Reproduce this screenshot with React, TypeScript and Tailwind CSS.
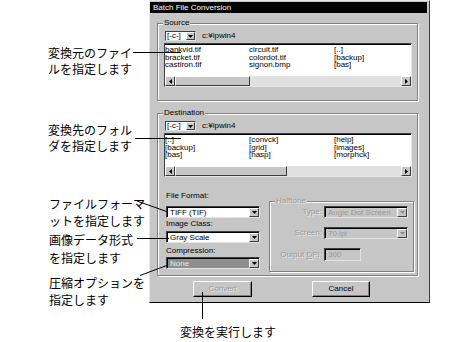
import React from "react";

const raised =
  "bg-[#c6c6c6] border border-t-white border-l-white border-r-[#3c3c3c] border-b-[#3c3c3c]";

function Tri({ dir, gray }: { dir: "down" | "left" | "right"; gray?: boolean }) {
  const fill = gray ? "#8c8c8c" : "#000";
  if (dir === "down")
    return (
      <svg width="5" height="3" viewBox="0 0 5 3">
        <polygon points="0,0 5,0 2.5,3" fill={fill} />
      </svg>
    );
  return (
    <svg width="3" height="5" viewBox="0 0 3 5">
      <polygon points={dir === "left" ? "3,0 3,5 0,2.5" : "0,0 0,5 3,2.5"} fill={fill} />
    </svg>
  );
}

function Group({
  label,
  className,
  gray,
  children,
}: {
  label: string;
  className: string;
  gray?: boolean;
  children: React.ReactNode;
}) {
  return (
    <div
      className={`relative border border-[#808080] shadow-[1px_1px_0_#fff,inset_1px_1px_0_#fff] ${className}`}
    >
      <span
        className={`absolute -top-[6px] left-[5px] px-[1px] bg-[#c6c6c6] leading-[10px] ${
          gray ? "text-[#9a9a9a] [text-shadow:1px_1px_0_#e8e8e8]" : "text-black"
        }`}
      >
        {label}
      </span>
      {children}
    </div>
  );
}

function Select({
  value,
  w,
  h = "h-[12px]",
  disabled,
  highlight,
}: {
  value: string;
  w: string;
  h?: string;
  disabled?: boolean;
  highlight?: boolean;
}) {
  const field = highlight
    ? "bg-[#8e8e8e] text-[#e8e8e8]"
    : disabled
    ? "bg-[#c6c6c6] text-[#9a9a9a]"
    : "bg-white text-black";
  return (
    <div
      className={`flex ${w} ${h} border border-t-[#404040] border-l-[#404040] border-r-[#e4e4e4] border-b-[#e4e4e4] shadow-[inset_1px_1px_0_#000]`}
    >
      <div className={`flex-1 flex items-center pl-[2px] mt-[1px] ml-[1px] leading-none ${field}`}>
        {value}
      </div>
      <div className={`w-[10px] mt-[1px] flex items-center justify-center ${raised}`}>
        <Tri dir="down" gray={disabled} />
      </div>
    </div>
  );
}

function Drive() {
  return (
    <div className="flex items-center h-[10px] ml-[1px]">
      <div className="flex w-[31px] h-[10px] border border-t-[#404040] border-l-[#404040] border-r-[#e4e4e4] border-b-[#e4e4e4]">
        <div className="flex-1 bg-white flex items-center pl-[1px] leading-none">[-c-]</div>
        <div className={`w-[9px] flex items-center justify-center ${raised}`}>
          <Tri dir="down" />
        </div>
      </div>
      <span className="ml-[6px] leading-none">c:¥ipwin4</span>
    </div>
  );
}

function FileList({ rows, thumb }: { rows: string[][]; thumb: string }) {
  return (
    <div className="mt-[2px] w-[248px] h-[44px] flex flex-col border border-t-[#404040] border-l-[#404040] border-r-[#e8e8e8] border-b-[#e8e8e8] shadow-[inset_0_1px_0_#000]">
      <div className="flex-1 bg-white mt-[1px] pt-[1px]">
        {rows.map((r, i) => (
          <div key={i} className="grid grid-cols-[84px_85px_1fr] leading-[7.5px] h-[7.5px]">
            {r.map((c, j) => (
              <span key={j}>{c}</span>
            ))}
          </div>
        ))}
      </div>
      <div className="flex h-[10px]">
        <div className={`w-[10px] flex items-center justify-center ${raised}`}>
          <Tri dir="left" />
        </div>
        <div className={`${thumb} ${raised}`} />
        <div className="flex-1 bg-[#e0e0e0]" />
        <div className={`w-[10px] flex items-center justify-center ${raised}`}>
          <Tri dir="right" />
        </div>
      </div>
    </div>
  );
}

function Label({ children }: { children: React.ReactNode }) {
  return <div className="h-[10px] leading-[10px]">{children}</div>;
}

function Button({ children, disabled, w }: { children: React.ReactNode; disabled?: boolean; w: string }) {
  return (
    <div
      className={`${w} h-[16px] flex items-center justify-center border border-t-white border-l-white border-r-black border-b-black shadow-[inset_-1px_-1px_0_#808080] ${
        disabled ? "text-[#9a9a9a] [text-shadow:1px_1px_0_#eeeeee]" : "text-black"
      }`}
    >
      {children}
    </div>
  );
}

function HalftoneRow({ label, children, className }: { label: React.ReactNode; children: React.ReactNode; className: string }) {
  return (
    <div className={`flex items-center ${className}`}>
      <span className="w-[54px] pr-[2px] text-right text-[#9a9a9a] [text-shadow:1px_1px_0_#e8e8e8] leading-none">
        {label}
      </span>
      {children}
    </div>
  );
}

export default function App() {
  return (
    <div className="relative w-[471px] h-[342px] bg-white overflow-hidden flex">
      {/* callouts */}
      <div className="w-[149px] pl-[48px] font-['Noto_Sans_CJK_JP','Noto_Sans_CJK_SC',sans-serif] text-[12px] text-black">
        <p className="mt-[45px] leading-[16px]">
          変換元のファイ
          <br />
          ルを指定します
        </p>
        <p className="mt-[45px] leading-[16px]">
          変換先のフォル
          <br />
          ダを指定します
        </p>
        <p className="mt-[41px] ml-[1px] leading-[17px]">
          ファイルフォーマ
          <br />
          ットを指定します
        </p>
        <p className="mt-[2px] ml-[1px] leading-[18px]">
          画像データ形式
          <br />
          を指定します
        </p>
        <p className="mt-[7px] ml-[1px] leading-[17px]">
          圧縮オプションを
          <br />
          指定します
        </p>
      </div>

      <div className="flex flex-col">
        {/* dialog */}
        <div className="w-[281px] h-[303px] bg-[#c6c6c6] border border-t-[#e6e6e6] border-l-[#e6e6e6] border-r-[#3a3a3a] border-b-black pt-[1px] font-['Liberation_Sans',Arial,sans-serif] text-[8px] text-black">
          <div className="h-[11px] mr-[2px] bg-black text-white pl-[3px] leading-[11px]">
            Batch File Conversion
          </div>

          <Group label="Source" className="mt-[10px] ml-[7px] w-[261px] h-[78px] pt-[7px] pl-[6px]">
            <Drive />
            <FileList
              thumb="w-[75px]"
              rows={[
                ["bankvid.tif", "circuit.tif", "[..]"],
                ["bracket.tif", "colordot.tif", "[backup]"],
                ["castiron.tif", "signon.bmp", "[bas]"],
              ]}
            />
          </Group>

          <Group label="Destination" className="mt-[12px] ml-[7px] w-[261px] h-[163px] pt-[7px] pl-[6px]">
            <Drive />
            <FileList
              thumb="w-[112px]"
              rows={[
                ["[..]", "[convck]", "[help]"],
                ["[backup]", "[grid]", "[images]"],
                ["[bas]", "[hasp]", "[morphck]"],
              ]}
            />
            <div className="flex">
              <div className="ml-[2px] mt-[14px] w-[94px] flex flex-col">
                <Label>File Format:</Label>
                <div className="mt-[5px]">
                  <Select w="w-[94px]" value="TIFF (TIF)" />
                </div>
                <div className="mt-[1px]">
                  <Label>Image Class:</Label>
                </div>
                <div className="mt-[2px]">
                  <Select w="w-[94px]" value="Gray Scale" />
                </div>
                <div className="mt-[3px]">
                  <Label>Compression:</Label>
                </div>
                <div className="mt-[1px]">
                  <Select w="w-[94px]" value="None" highlight />
                </div>
              </div>

              <Group label="Halftone" gray className="mt-[24px] ml-[9px] w-[145px] h-[71px] pt-[4px]">
                <HalftoneRow label="Type:" className="">
                  <Select w="w-[84px]" value="Angle Dot Screen" disabled />
                </HalftoneRow>
                <HalftoneRow label="Screen:" className="mt-[9px]">
                  <Select w="w-[84px]" value="70 lpi" disabled />
                </HalftoneRow>
                <HalftoneRow
                  label={
                    <>
                      Output <span className="underline">D</span>PI:
                    </>
                  }
                  className="mt-[9px]"
                >
                  <div className="w-[37px] h-[13px] flex items-center pl-[3px] text-[#9a9a9a] border border-t-[#404040] border-l-[#404040] border-r-[#e4e4e4] border-b-[#e4e4e4] shadow-[inset_1px_1px_0_#000] leading-none">
                    300
                  </div>
                </HalftoneRow>
              </Group>
            </div>
          </Group>

          <div className="flex mt-[5px] pl-[43px]">
            <Button w="w-[59px]" disabled>
              Convert
            </Button>
            <div className="ml-[60px]">
              <Button w="w-[58px]">Cancel</Button>
            </div>
          </div>
        </div>

        <div className="mt-[22px] pl-[31px] font-['Noto_Sans_CJK_JP','Noto_Sans_CJK_SC',sans-serif] text-[12px] leading-[14px] text-black">
          変換を実行します
        </div>
      </div>

      {/* leader lines */}
      <svg className="absolute inset-0 pointer-events-none" width="471" height="342">
        <g stroke="#000" strokeWidth="1" fill="none">
          <line x1="133" y1="52.5" x2="181" y2="52.5" />
          <line x1="135" y1="138.5" x2="181" y2="138.5" />
          <line x1="137" y1="201" x2="168" y2="212" />
          <line x1="137" y1="238.5" x2="169" y2="238.5" />
          <line x1="140" y1="275.5" x2="168" y2="265" />
          <line x1="202.5" y1="292" x2="202.5" y2="319" />
        </g>
      </svg>
    </div>
  );
}
